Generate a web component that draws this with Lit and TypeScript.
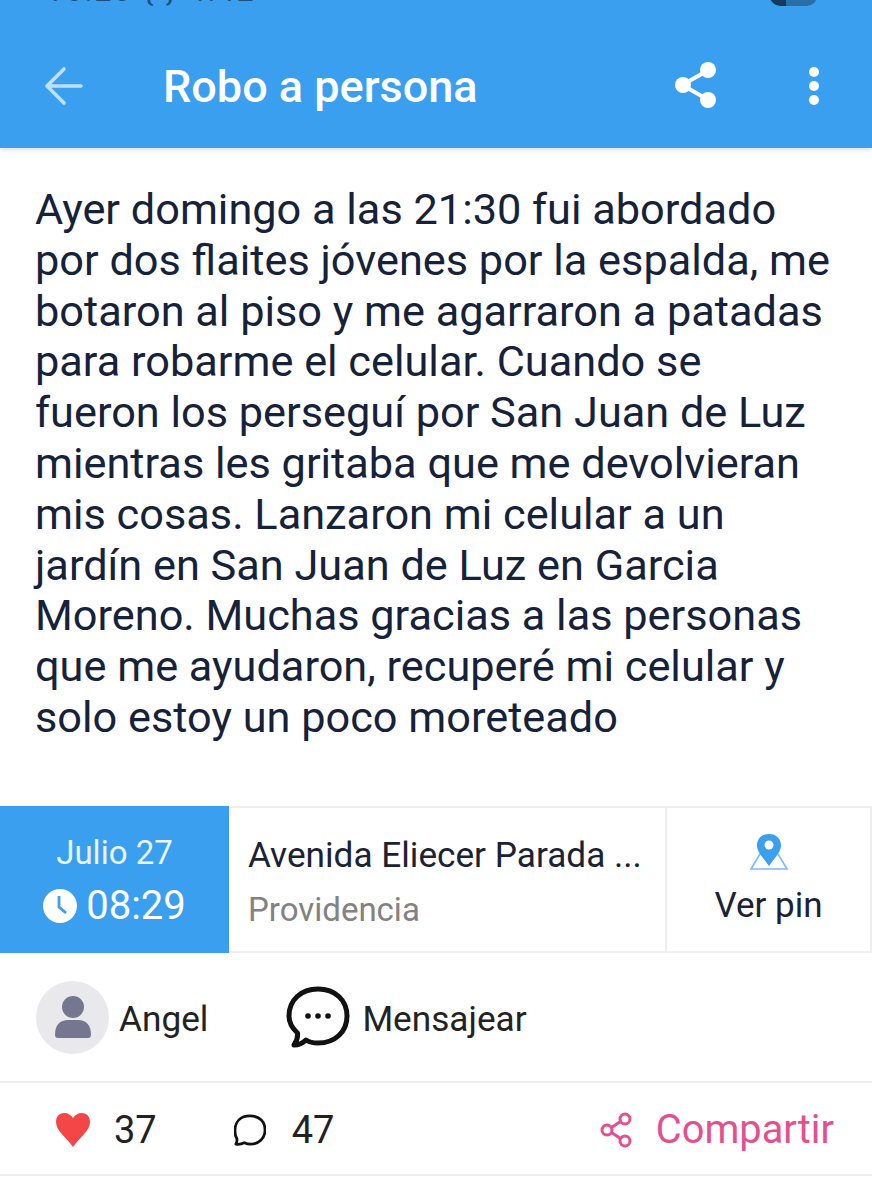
import { LitElement, html, css } from "lit";
import { customElement } from "lit/decorators.js";

@customElement("app-root")
export class AppRoot extends LitElement {
  static styles = css`
    :host {
      display: block;
      width: 872px;
      height: 1200px;
      overflow: hidden;
      background: #fff;
      font-family: Roboto, "Noto Sans", sans-serif;
      color: #1a2233;
    }
    .appbar {
      height: 148px;
      background: #3a9fef;
      position: relative;
      display: flex;
      align-items: center;
      padding: 24px 51px 0 44px;
      box-sizing: border-box;
      box-shadow: 0 2px 5px rgba(0, 0, 0, 0.13);
    }
    .status {
      position: absolute;
      left: 46px;
      right: 55px;
      top: -24px;
      display: flex;
      justify-content: space-between;
      font-size: 30px;
      line-height: 30px;
      letter-spacing: 2.5px;
      color: #1d4f80;
    }
    .status-right {
      display: flex;
      align-items: flex-end;
      gap: 12px;
      height: 30px;
    }
    .marks {
      font-size: 20px;
      line-height: 30px;
      letter-spacing: 3px;
    }
    .batt {
      width: 47px;
      height: 30px;
      border-radius: 10px;
      background: linear-gradient(90deg, #143a5e 34%, #2a6ea8 34%);
      display: block;
    }
    .back {
      width: 40px;
      height: 40px;
      display: block;
    }
    .title {
      margin-left: 79px;
      font-size: 45px;
      font-weight: 500;
      color: #fff;
      flex: 1;
    }
    .share {
      width: 44px;
      height: 48px;
      display: block;
      margin-right: 89px;
      margin-top: -2px;
    }
    .dots {
      width: 14px;
      height: 40px;
      display: block;
    }
    .body {
      margin: 0;
      padding: 37px 41px 0 35px;
      font-size: 43.3px;
      line-height: 50.8px;
      height: 658px;
      box-sizing: border-box;
      color: #16213a;
    }
    .info {
      display: grid;
      grid-template-columns: 229px 438px 205px;
      height: 147px;
      width: 872px;
    }
    .date {
      background: #3a9fef;
      color: #fff;
      display: flex;
      flex-direction: column;
      align-items: center;
      justify-content: center;
      gap: 11px;
      padding-top: 5px;
      box-sizing: border-box;
    }
    .date .d {
      font-size: 33px;
      line-height: 38px;
      color: #e9f4fe;
      margin-top: -2px;
    }
    .date .t {
      display: flex;
      align-items: center;
      gap: 9px;
      font-size: 40px;
      line-height: 44px;
      margin-top: 1px;
    }
    .clock {
      width: 34px;
      height: 34px;
      display: block;
    }
    .place {
      border: solid #eeeeee;
      border-width: 2px 2px 2px 0;
      padding: 25px 18px 0 19px;
      box-sizing: border-box;
      min-width: 0;
    }
    .place .a {
      font-size: 35.2px;
      line-height: 44px;
      white-space: nowrap;
    }
    .place .p {
      font-size: 33px;
      line-height: 40px;
      margin-top: 13px;
      color: #828282;
    }
    .pin {
      border: solid #eeeeee;
      border-width: 2px 2px 2px 0;
      display: flex;
      flex-direction: column;
      align-items: center;
      box-sizing: border-box;
      padding-top: 25px;
      font-size: 35px;
    }
    .pin svg {
      width: 38px;
      height: 38px;
      display: block;
      margin-bottom: 14px;
    }
    .user {
      height: 130px;
      display: flex;
      align-items: center;
      padding-left: 36px;
      box-sizing: border-box;
      font-size: 35.2px;
      color: #222;
      border-bottom: 2px solid #eeeeee;
    }
    .user span {
      margin-top: 3px;
    }
    .avatar {
      width: 73px;
      height: 73px;
      border-radius: 50%;
      background: #e9e9ec;
      display: flex;
      align-items: center;
      justify-content: center;
      margin-right: 10px;
    }
    .avatar svg {
      width: 38px;
      height: 42px;
      display: block;
    }
    .msg {
      width: 64px;
      height: 64px;
      display: block;
      margin-left: 78px;
      margin-right: 12px;
    }
    .stats {
      height: 93px;
      display: flex;
      align-items: center;
      padding: 2px 38px 0 55px;
      box-sizing: border-box;
      font-size: 38px;
      color: #222;
      border-bottom: 2px solid #eeeeee;
    }
    .heart {
      width: 36px;
      height: 36px;
      display: block;
      margin-right: 23px;
    }
    .bubble {
      width: 32px;
      height: 34px;
      display: block;
      margin-left: 77px;
      margin-right: 26px;
    }
    .cta {
      margin-left: auto;
      display: flex;
      align-items: center;
      gap: 24px;
      color: #e4508f;
      font-size: 39.8px;
    }
    .cta svg {
      width: 32px;
      height: 36px;
      display: block;
    }
  `;

  render() {
    return html`
      <div class="appbar">
        <div class="status">
          <span>16:20 { } 4:42</span>
          <span class="status-right"><span class="marks">∙∙ ∙ ▾ ∙∙∙</span><span class="batt"></span></span>
        </div>
        <svg class="back" viewBox="0 0 40 40" fill="none" stroke="#bfe0fb" stroke-width="3.6" stroke-linecap="round" stroke-linejoin="round">
          <path d="M37 20H3M20 3 3 20l17 17" />
        </svg>
        <div class="title">Robo a persona</div>
        <svg class="share" viewBox="0 0 44 48">
          <path d="M33 10 8 24l25 14" fill="none" stroke="#fff" stroke-width="4" />
          <circle cx="34" cy="9" r="8" fill="#fff" />
          <circle cx="9" cy="24" r="8" fill="#fff" />
          <circle cx="34" cy="39" r="8" fill="#fff" />
        </svg>
        <svg class="dots" viewBox="0 0 14 40" fill="#fff">
          <circle cx="7" cy="6" r="5" />
          <circle cx="7" cy="20" r="5" />
          <circle cx="7" cy="34" r="5" />
        </svg>
      </div>
      <p class="body">Ayer domingo a las 21:30 fui abordado por dos flaites jóvenes por la espalda, me botaron al piso y me agarraron a patadas para robarme el celular. Cuando se fueron los perseguí por San Juan de Luz mientras les gritaba que me devolvieran mis cosas. Lanzaron mi celular a un jardín en San Juan de Luz en Garcia Moreno. Muchas gracias a las personas que me ayudaron, recuperé mi celular y solo estoy un poco moreteado</p>
      <div class="info">
        <div class="date">
          <div class="d">Julio 27</div>
          <div class="t">
            <svg class="clock" viewBox="0 0 34 34">
              <circle cx="17" cy="17" r="17" fill="#fff" />
              <path d="M16 7v11l7 6" fill="none" stroke="#3a9fef" stroke-width="2.800" />
            </svg>
            <span>08:29</span>
          </div>
        </div>
        <div class="place">
          <div class="a">Avenida Eliecer Parada ...</div>
          <div class="p">Providencia</div>
        </div>
        <div class="pin">
          <svg viewBox="0 0 38 38">
            <path d="M10 21 1 36h36l-9-15" fill="#fff" stroke="#7dbcee" stroke-width="1.600" />
            <path d="M19 1C10.500 1 7 7 7 12.500c0 7 7 13 12 20.500 5-7.500 12-13.500 12-20.500C31 7 27.500 1 19 1Z" fill="#3a9fef" />
            <circle cx="19" cy="12" r="4.500" fill="#fff" />
          </svg>
          <span>Ver pin</span>
        </div>
      </div>
      <div class="user">
        <div class="avatar">
          <svg viewBox="0 0 38 42" fill="#74778f">
            <circle cx="19" cy="11" r="11" />
            <path d="M1 38.500C1 29 6 24 14 24h10c8 0 13 5 13 14.500C37 41 36 42 34 42H4C2 42 1 41 1 38.500Z" />
          </svg>
        </div>
        <span>Angel</span>
        <svg class="msg" viewBox="0 0 64 64">
          <path d="M8 60c2.500-3.500 4-8 3.500-12C6 43 3 38 3 31 3 15 15 4 32 4s29 11 29 27-12 27-29 27c-4.500 0-9-1-12-3-3 3-7 5-12 5Z" fill="none" stroke="#111" stroke-width="5" stroke-linejoin="round" />
          <circle cx="22" cy="31" r="2.800" fill="#111" />
          <circle cx="32" cy="31" r="2.800" fill="#111" />
          <circle cx="42" cy="31" r="2.800" fill="#111" />
        </svg>
        <span>Mensajear</span>
      </div>
      <div class="stats">
        <svg class="heart" viewBox="0 0 36 36">
          <path d="M18 35C12 26 1 19 1 10 1 4 5 1 9.500 1 13 1 16 3 18 6c2-3 5-5 8.500-5C31 1 35 4 35 10c0 9-11 16-17 25Z" fill="#f44646" />
        </svg>
        <span>37</span>
        <svg class="bubble" viewBox="0 0 34 34">
          <path d="M2 32c1-2 1.500-4 1-6-1.500-2.500-2-5-2-8C1 8 7 2 17 2s16 6 16 15-7 15-15 15c-3 0-5-.500-7-1.500-3 1.500-6 2-9 1.500Z" fill="none" stroke="#111" stroke-width="3" stroke-linejoin="round" />
        </svg>
        <span>47</span>
        <div class="cta">
          <svg viewBox="0 0 32 36" fill="none" stroke="#e4508f" stroke-width="3">
            <circle cx="25" cy="7" r="5" />
            <circle cx="7" cy="18" r="5" />
            <circle cx="25" cy="29" r="5" />
            <path d="m11.500 15.500 9-6M11.500 20.500l9 6" />
          </svg>
          <span>Compartir</span>
        </div>
      </div>
    `;
  }
}
